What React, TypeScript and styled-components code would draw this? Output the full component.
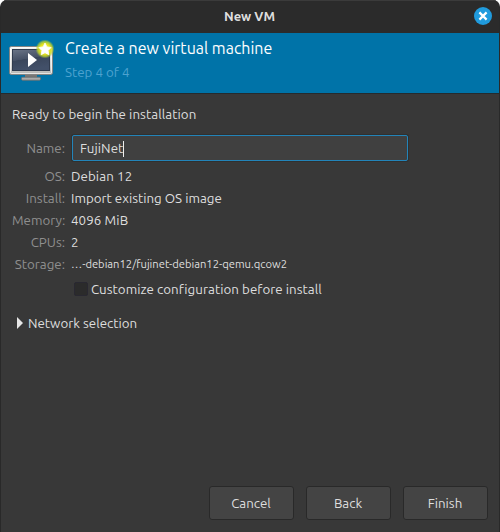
import React from "react";
import styled, { createGlobalStyle } from "styled-components";

const GlobalStyle = createGlobalStyle`
  * { box-sizing: border-box; }
  body { margin: 0; background: #fff; }
`;

const Window = styled.main`
  width: 500px;
  height: 532px;
  display: flex;
  flex-direction: column;
  overflow: hidden;
  border: 1px solid #292929;
  border-top: 0;
  border-bottom: 0;
  border-radius: 7px 7px 0 0;
  background: #383838;
  color: #dedede;
  font: 13.33px/24px Ubuntu, "Noto Sans", sans-serif;
  white-space: nowrap;
`;

const TitleBar = styled.header`
  flex: none;
  height: 33px;
  display: grid;
  grid-template-columns: 1fr auto 1fr;
  align-items: center;
  padding: 0 7px 1px;
  background: #2b2b2b;
  box-shadow: inset 0 1px #3b3b3b;
`;

const WindowTitle = styled.h1`
  grid-column: 2;
  margin: 0;
  padding-right: 1px;
  font-size: 13px;
  line-height: 22px;
  font-weight: 700;
`;

const CloseButton = styled.button`
  justify-self: end;
  width: 18px;
  height: 18px;
  padding: 0;
  border: 0;
  background: none;
  svg { display: block; }
`;

const Banner = styled.section`
  flex: none;
  height: 61px;
  display: flex;
  gap: 11px;
  padding: 4px 0 0 6px;
  background: #0073a8;
  border-bottom: 1px solid #252b2e;
  svg { display: block; flex: none; }
`;

const Heading = styled.h2`
  margin: 0;
  font-size: 16px;
  line-height: 22px;
  font-weight: 400;
  color: #fff;
`;

const Text = styled.span<{ $track?: number; $size?: number }>`
  letter-spacing: ${(p) => p.$track ?? 0}px;
  font-size: ${(p) => p.$size ?? 13.33}px;
`;

const Step = styled.div`
  margin-top: 2px;
  color: #4da2cf;
`;

const Body = styled.section`
  flex: 1;
  display: flex;
  flex-direction: column;
  padding: 9px 11px 12px;
`;

const Intro = styled.p`
  margin: 0;
  height: 32px;
`;

const Details = styled.dl`
  display: grid;
  grid-template-columns: 53px 337px;
  column-gap: 6px;
  grid-template-rows: 30px;
  grid-auto-rows: 22px;
  margin: 0;
`;

const Label = styled.dt`
  text-align: right;
  color: #8f8f8f;
  &:first-child { line-height: 28px; }
`;

const Value = styled.dd<{ $compact?: boolean }>`
  margin: 0;
  line-height: ${(p) => (p.$compact ? 22 : 24)}px;
`;

const NameField = styled.div`
  height: 26px;
  margin-left: 1px;
  display: flex;
  align-items: center;
  padding: 1px 0 0 7px;
  border: 1px solid #2384b9;
  border-radius: 2px;
  background: #404040;
  box-shadow: 0 0 0 1px #30302f;
`;

const Caret = styled.i`
  width: 1px;
  height: 16px;
  background: #eee;
`;

const CheckRow = styled.label`
  display: flex;
  align-items: center;
  gap: 3px;
  height: 22px;
  margin: 3px 0 0 62px;
`;

const CheckBox = styled.span`
  width: 14px;
  height: 14px;
  border: 1px solid #292831;
  border-radius: 2px;
  background: #2b2b2b;
`;

const RowText = styled(Text)`
  padding-top: 2px;
`;

const Expander = styled.div`
  display: flex;
  align-items: center;
  gap: 5px;
  height: 22px;
  margin: 12px 0 0 5px;
`;

const Actions = styled.footer`
  display: flex;
  justify-content: flex-end;
  gap: 12px;
  margin-top: auto;
`;

const ActionButton = styled.button`
  width: 85px;
  height: 34px;
  padding: 2px 1px 0 0;
  border: 1px solid #292929;
  border-radius: 3px;
  background: #444;
  color: #dedede;
  font: inherit;
`;

const CloseIcon = () => (
  <svg width="18" height="18" viewBox="0 0 18 18">
    <circle cx="9" cy="9" r="9" fill="#209bdd" />
    <path d="M5.4 5.4 12.6 12.6M12.6 5.4 5.4 12.6" stroke="#fff" strokeWidth="2.2" />
  </svg>
);

const MonitorIcon = () => (
  <svg width="47" height="46" viewBox="0 0 47 46">
    <defs>
      <linearGradient id="bezel" x1="0" y1="0" x2="0" y2="1">
        <stop offset="0" stopColor="#f5f5f3" />
        <stop offset=".7" stopColor="#d2d2d0" />
        <stop offset="1" stopColor="#b5b5b3" />
      </linearGradient>
      <linearGradient id="screen" x1="0" y1="0" x2=".3" y2="1">
        <stop offset="0" stopColor="#6b7587" />
        <stop offset=".5" stopColor="#465166" />
        <stop offset=".52" stopColor="#3a465b" />
        <stop offset="1" stopColor="#425069" />
      </linearGradient>
      <radialGradient id="glow">
        <stop offset="0" stopColor="#fff76a" />
        <stop offset=".55" stopColor="#e3e31e" />
        <stop offset=".78" stopColor="#c4d72b" stopOpacity=".75" />
        <stop offset="1" stopColor="#8fbe43" stopOpacity="0" />
      </radialGradient>
    </defs>
    <path d="M18 37.5h12v3H18z" fill="#777" />
    <rect x="14.5" y="40.2" width="19" height="3" rx="1" fill="#aaa" stroke="#6c6c6a" strokeWidth=".8" />
    <rect x="2.5" y="9.5" width="43" height="28" rx="1.8" fill="url(#bezel)" stroke="#858583" />
    <rect x="3.5" y="10.5" width="41" height="26" rx="1" fill="none" stroke="#fff" strokeOpacity=".65" />
    <rect x="5.5" y="12.5" width="37" height="21" fill="url(#screen)" stroke="#303b4e" />
    <path d="M21 16v14l9-7z" fill="#fff" />
    <circle cx="38" cy="12" r="9.6" fill="url(#glow)" />
    <path d="m38 6 1.9 3.9 4.2.6-3 3 .7 4.2-3.8-2-3.8 2 .7-4.2-3-3 4.2-.6z" fill="#fff" stroke="#fff" strokeWidth=".8" strokeLinejoin="round" />
  </svg>
);

const details = [
  { label: "OS:", value: "Debian 12", track: 0.1 },
  { label: "Install:", value: "Import existing OS image" },
  { label: "Memory:", value: "4096 MiB", track: 0.1 },
  { label: "CPUs:", value: "2" },
  { label: "Storage:", value: "…-debian12/fujinet-debian12-qemu.qcow2", size: 11.2, compact: true },
];

export default function App() {
  return (
    <>
      <GlobalStyle />
      <Window>
        <TitleBar>
          <WindowTitle>New VM</WindowTitle>
          <CloseButton aria-label="Close"><CloseIcon /></CloseButton>
        </TitleBar>
        <Banner>
          <MonitorIcon />
          <div>
            <Heading>Create a new virtual machine</Heading>
            <Step><Text>Step 4 of 4</Text></Step>
          </div>
        </Banner>
        <Body>
          <Intro><Text $track={0.07}>Ready to begin the installation</Text></Intro>
          <Details>
            <Label>Name:</Label>
            <Value><NameField><Text $track={0.05}>FujiNet</Text><Caret /></NameField></Value>
            {details.map((d) => (
              <React.Fragment key={d.label}>
                <Label>{d.label}</Label>
                <Value $compact={d.compact}><Text $size={d.size} $track={d.track}>{d.value}</Text></Value>
              </React.Fragment>
            ))}
          </Details>
          <CheckRow><CheckBox /><RowText $track={0.04}>Customize configuration before install</RowText></CheckRow>
          <Expander>
            <svg width="6" height="12" viewBox="0 0 6 12"><path d="M0 0v12l6-6z" fill="#e6e6e6" /></svg>
            <RowText>Network selection</RowText>
          </Expander>
          <Actions>
            {["Cancel", "Back", "Finish"].map((name) => (
              <ActionButton key={name}>{name}</ActionButton>
            ))}
          </Actions>
        </Body>
      </Window>
    </>
  );
}
